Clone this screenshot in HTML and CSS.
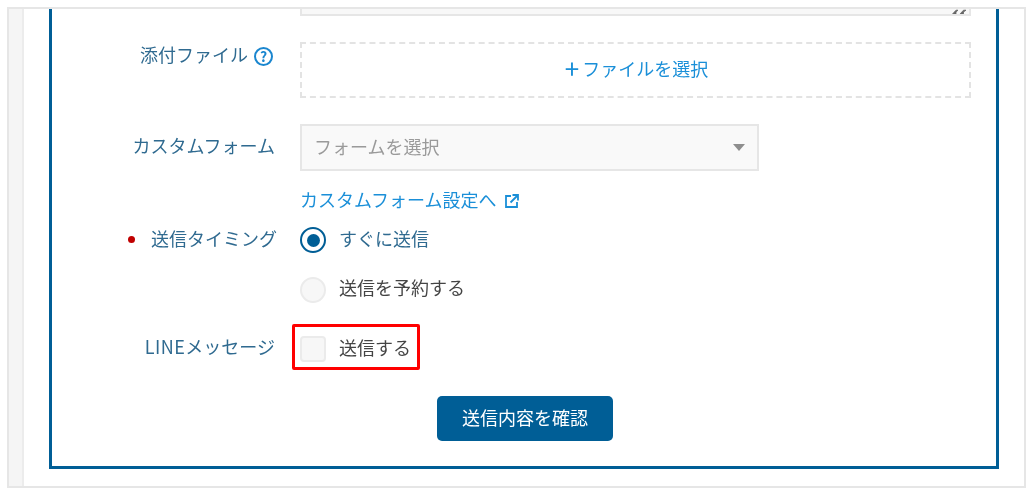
FILE: index.html
```html
<!DOCTYPE html>
<html lang="ja">
<head>
<meta charset="utf-8">
<title>送信内容</title>
<link rel="stylesheet" href="styles.css">
</head>
<body>
<div class="frame">
  <div class="rail"></div>
  <main class="main">
    <form class="panel">
      <div class="row row-text">
        <div class="control">
          <div class="textarea">
            <svg class="grip" width="16" height="6" viewBox="0 0 16 6"><path d="M0.5 5 L4 1.2 H6 L4 3 V5.5 M8 5 L11.5 1.2 H14 L11.5 3 V5.5" fill="#666" stroke="#666" stroke-width="0.8"/></svg>
          </div>
        </div>
      </div>
      <div class="row row-file">
        <div class="label label-file">添付ファイル<span class="help">?</span></div>
        <div class="control"><div class="drop"><span class="plus">+</span>ファイルを選択</div></div>
      </div>
      <div class="row row-form">
        <div class="label label-form">カスタムフォーム</div>
        <div class="control">
          <div class="select"><span>フォームを選択</span><i class="caret"></i></div>
          <a class="link">カスタムフォーム設定へ<svg class="ext" width="14" height="14" viewBox="0 0 14 14" fill="none" stroke="#1a8fd8" stroke-width="1.8"><path d="M6 2 H1 V13 H12 V8"/><path d="M5.5 8.5 L12.5 1.5 M7.5 1 H13 V6.5"/></svg></a>
        </div>
      </div>
      <div class="row row-radio1">
        <div class="label label-timing"><i class="req"></i>送信タイミング</div>
        <div class="control option"><i class="radio on"></i><span class="opt-on">すぐに送信</span></div>
      </div>
      <div class="row row-radio2">
        <div class="label"></div>
        <div class="control option"><i class="radio"></i><span>送信を予約する</span></div>
      </div>
      <div class="row row-check">
        <div class="label label-line"><span class="latin">LINE</span>メッセージ</div>
        <div class="control option marked"><i class="check"></i><span>送信する</span></div>
      </div>
      <div class="actions"><button type="button" class="btn">送信内容を確認</button></div>
    </form>
  </main>
</div>
</body>
</html>
```
FILE: styles.css
```css
* { box-sizing: border-box; }
html, body { margin: 0; height: 100%; background: #fff; overflow: hidden; }
body { font-family: "Noto Sans CJK JP", "Liberation Sans", sans-serif; font-size: 18px; color: #444; padding: 7px 8px 0 7px; }
.frame { display: flex; height: 481px; border: 2px solid #e6e6e6; filter: blur(0.35px); }
.rail { width: 15px; background: #f5f5f5; border-right: 2px solid #ececec; }
.main { flex: 1; padding: 0 25px 17px; }
.panel { height: 100%; border: 3px solid #005e96; border-top: 0; padding-right: 25px; display: flex; flex-direction: column; }
.row { display: flex; gap: 25px; }
.label { width: 223px; height: 26px; flex: none; display: flex; justify-content: flex-end; align-items: flex-start; color: #2f6a90; line-height: 22px; white-space: nowrap; }
.control { flex: 1; min-width: 0; }
.row-text { height: 7px; }
.row-text .control { margin-left: 248px; }
.textarea { position: relative; height: 7px; background: #f8f8f8; border: 2px solid #e6e6e6; border-top: 0; overflow: hidden; }
.grip { position: absolute; right: 1px; top: 0; }
.row-file { margin-top: 26px; }
.label-file { line-height: 24px; }
.help { width: 19px; height: 19px; margin: 5px 2px 0 6px; border: 2px solid #1a86cf; border-radius: 50%; color: #1a86cf; font-size: 14px; font-weight: 700; line-height: 15px; text-align: center; flex: none; }
.drop { height: 56px; border: 2px dashed #e3e3e3; padding: 0 0 4px 2px; display: flex; align-items: center; justify-content: center; color: #1a8fd8; }
.plus { font-size: 26px; line-height: 1; margin-right: 3px; }
.row-form { margin-top: 26px; }
.label-form { height: 44px; line-height: 42px; }
.select { width: 459px; height: 47px; background: #f9f9f9; border: 2px solid #e6e6e6; display: flex; align-items: center; justify-content: space-between; padding: 0 12px 4px 12px; color: #9a9a9a; }
.caret { width: 0; height: 0; margin-top: 4px; border-left: 6px solid transparent; border-right: 6px solid transparent; border-top: 7px solid #8e8e8e; }
.link { display: flex; align-items: center; height: 30px; margin-top: 14px; margin-bottom: 12px; padding-bottom: 2px; color: #1a8fd8; }
.ext { margin: 4px 0 0 9px; }
.option { display: flex; align-items: center; height: 26px; gap: 13px; line-height: 26px; }
.option span { margin-bottom: 4px; }
.radio { width: 26px; height: 26px; border-radius: 50%; border: 2px solid #ebebeb; background: #f7f7f7; flex: none; }
.radio.on { border-color: #005e96; background: #fff; display: flex; align-items: center; justify-content: center; }
.radio.on::after { content: ""; width: 13px; height: 13px; border-radius: 50%; background: #005e96; }
.req { width: 7px; height: 7px; margin: 9px 16px 0 0; border-radius: 50%; background: #c00000; }
.label-timing { width: 225px; margin-right: -2px; }
.opt-on { color: #2f6a90; }
.row-radio2 { margin-top: 24px; }
.row-radio2 span { margin-bottom: 6px; }
.row-check { margin-top: 33px; }
.label-line { line-height: 20px; }
.latin { letter-spacing: 0.5px; }
.check { width: 26px; height: 26px; border-radius: 4px; border: 2px solid #ebebeb; background: #f7f7f7; flex: none; }
.marked { position: relative; }
.marked::after { content: ""; position: absolute; left: -8px; top: -12px; width: 122px; height: 40px; border: 3px solid #f00; border-radius: 2px; box-sizing: content-box; }
.actions { margin-top: 34px; margin-left: 385px; }
.btn { width: 176px; height: 45px; padding: 0 0 4px; background: #005e96; color: #fff; border: 0; border-radius: 5px; font: inherit; }
```
